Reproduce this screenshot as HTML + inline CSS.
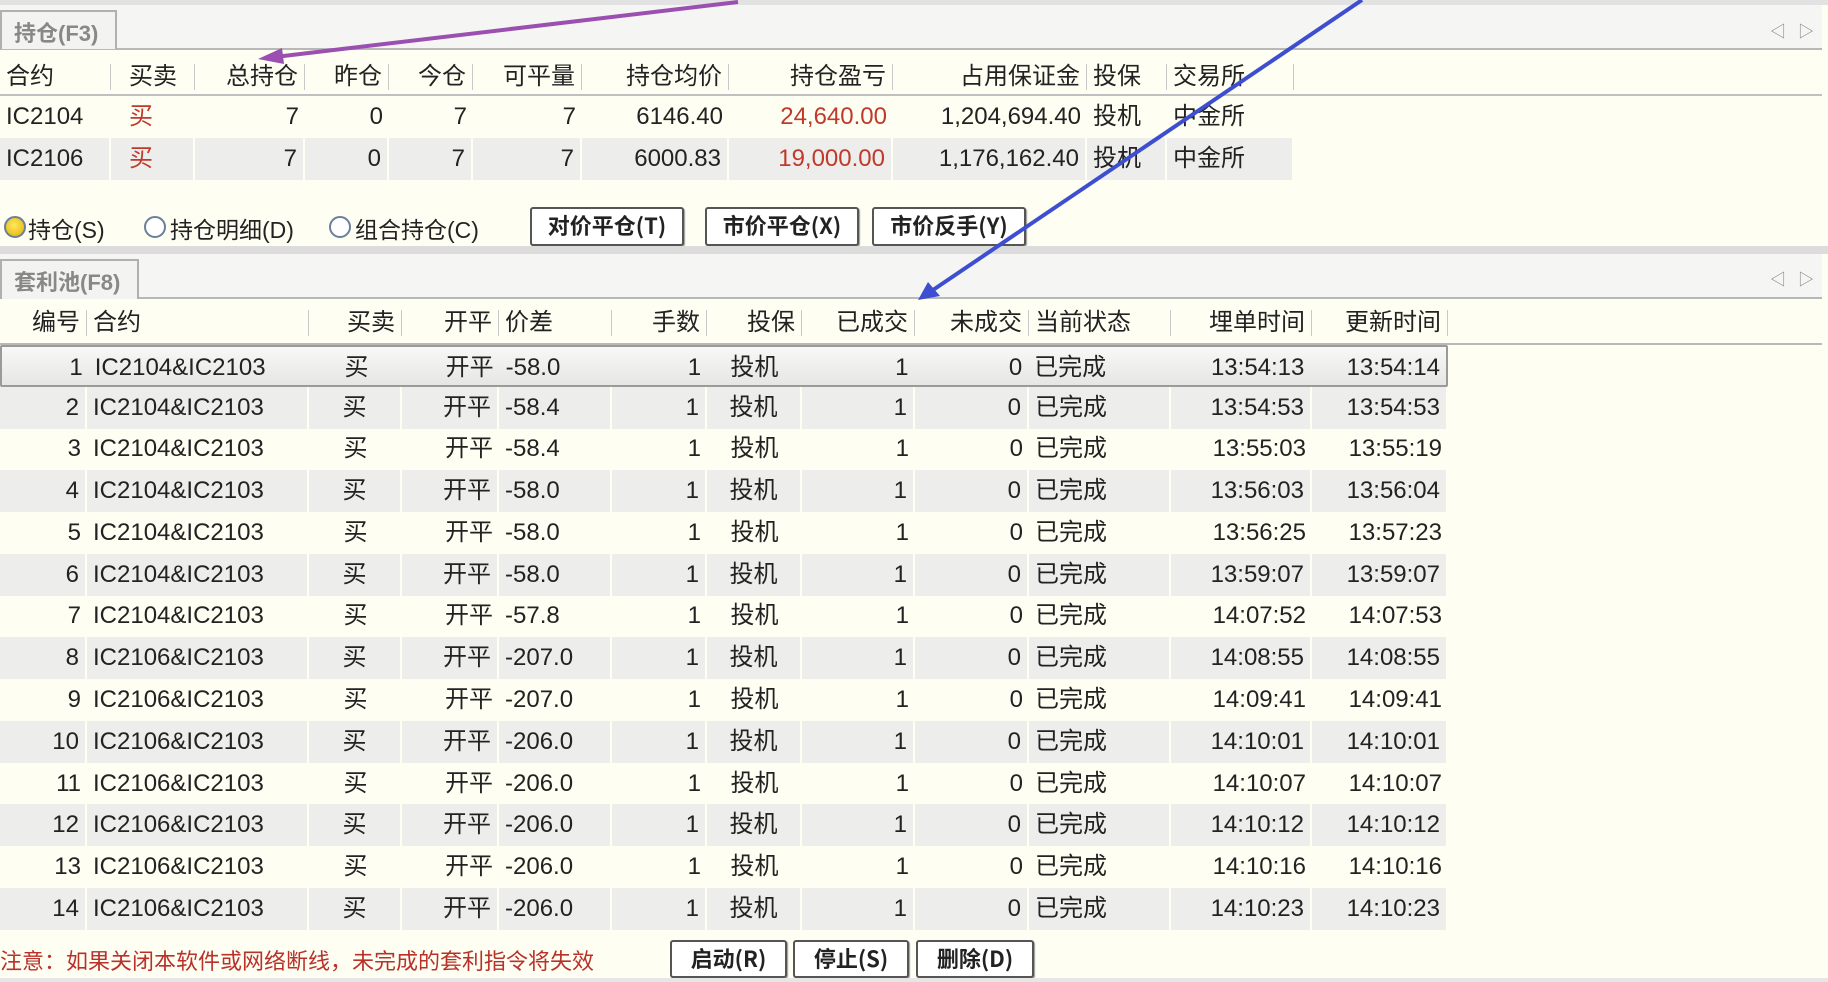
<!DOCTYPE html>
<html><head><meta charset="utf-8"><style>
*{margin:0;padding:0;box-sizing:border-box}
body{width:1828px;height:982px;background:#fefef3;font-family:"Liberation Sans","Noto Sans CJK SC",sans-serif;font-size:24px;color:#222;position:relative;overflow:hidden}
.abs{position:absolute}
.strip{position:absolute;left:0;width:1822px;background:#f5f5f3;border-bottom:2px solid #b8b8b8}
.tab{position:absolute;left:0;background:#f3f3f1;border:2px solid #b0b0b0;border-bottom:none;color:#888;font-weight:bold;font-size:22px;padding:4px 0 0 12px}
.row{position:absolute;left:0;display:flex;height:42px;line-height:42px;white-space:nowrap}
.row>div{overflow:visible;padding:0 6px}
.hd>div{border-right:1px solid #c8c8c8;height:26px;line-height:26px;margin-top:8px}
.g{background:#ededeb}
.g>div{border-right:2px solid #fefef3}
.r{text-align:right}.c{text-align:center}.red{color:#c0392b}
.btn{position:absolute;border:2px solid #555;border-radius:3px;background:#fff;font-weight:bold;font-size:22px;text-align:center;box-shadow:1px 1px 1px #999;font-family:"Noto Sans CJK SC",sans-serif}
.rad{position:absolute;top:216px;width:22px;height:22px;border-radius:50%;border:2px solid #6a7f9a;background:#fff}
.lbl{position:absolute;top:211px;font-size:23px}
.arr{position:absolute;font-size:16px;color:#888}
</style></head><body>
<div class="abs" style="left:0;top:0;width:1828px;height:5px;background:#e2e2e2"></div>
<div class="strip" style="top:5px;height:45px"></div>
<div class="tab" style="top:10px;width:117px;height:39px">持仓(F3)</div>
<div class="arr" style="left:1770px;top:18px">◁</div><div class="arr" style="left:1798px;top:18px">▷</div>

<div class="row hd" style="top:56px;height:40px;border-bottom:2px solid #c0c0c0;width:1822px">
<div style="width:111px">合约</div><div style="width:84px;padding-left:18px">买卖</div><div style="width:110px" class="r">总持仓</div><div style="width:84px" class="r">昨仓</div><div style="width:84px" class="r">今仓</div><div style="width:109px" class="r">可平量</div><div style="width:147px" class="r">持仓均价</div><div style="width:164px" class="r">持仓盈亏</div><div style="width:194px" class="r">占用保证金</div><div style="width:80px">投保</div><div style="width:127px">交易所</div>
</div>
<div class="row" style="top:96px">
<div style="width:111px">IC2104</div><div style="width:84px;padding-left:18px" class="red">买</div><div style="width:110px" class="r">7</div><div style="width:84px" class="r">0</div><div style="width:84px" class="r">7</div><div style="width:109px" class="r">7</div><div style="width:147px" class="r">6146.40</div><div style="width:164px" class="r red">24,640.00</div><div style="width:194px" class="r">1,204,694.40</div><div style="width:80px">投机</div><div style="width:127px">中金所</div></div>
<div class="row g" style="top:138px">
<div style="width:111px">IC2106</div><div style="width:84px;padding-left:18px" class="red">买</div><div style="width:110px" class="r">7</div><div style="width:84px" class="r">0</div><div style="width:84px" class="r">7</div><div style="width:109px" class="r">7</div><div style="width:147px" class="r">6000.83</div><div style="width:164px" class="r red">19,000.00</div><div style="width:194px" class="r">1,176,162.40</div><div style="width:80px">投机</div><div style="width:127px">中金所</div></div>

<div class="rad" style="left:4px;background:radial-gradient(circle at 45% 40%,#ffe860,#e0b000)"></div><div class="lbl" style="left:28px">持仓(S)</div>
<div class="rad" style="left:144px"></div><div class="lbl" style="left:170px">持仓明细(D)</div>
<div class="rad" style="left:329px"></div><div class="lbl" style="left:355px">组合持仓(C)</div>
<div class="btn" style="left:530px;top:207px;width:154px;height:39px;line-height:33px">对价平仓(T)</div>
<div class="btn" style="left:705px;top:207px;width:154px;height:39px;line-height:33px">市价平仓(X)</div>
<div class="btn" style="left:872px;top:207px;width:154px;height:39px;line-height:33px">市价反手(Y)</div>

<div class="abs" style="left:0;top:246px;width:1828px;height:8px;background:#dcdcdc"></div>
<div class="strip" style="top:254px;height:45px"></div>
<div class="tab" style="top:259px;width:139px;height:40px">套利池(F8)</div>
<div class="arr" style="left:1770px;top:266px">◁</div><div class="arr" style="left:1798px;top:266px">▷</div>

<div class="row hd" style="top:302px;height:43px;border-bottom:2px solid #b8b8b8;width:1822px">
<div style="width:87px" class="r">编号</div><div style="width:222px">合约</div><div style="width:93px" class="r">买卖</div><div style="width:97px" class="r">开平</div><div style="width:113px">价差</div><div style="width:95px" class="r">手数</div><div style="width:95px" class="r">投保</div><div style="width:113px" class="r">已成交</div><div style="width:114px" class="r">未成交</div><div style="width:142px">当前状态</div><div style="width:141px" class="r">埋单时间</div><div style="width:136px" class="r">更新时间</div>
</div>

<div id="t2"></div>
<div class="row" style="top:345px;width:1448px;background:linear-gradient(#f8f8f6,#e6e6e4);border:2px solid #9a9a9a;border-radius:2px"><div style="width:87px" class="r">1</div><div style="width:222px">IC2104&amp;IC2103</div><div style="width:93px" class="c">买</div><div style="width:97px" class="r">开平</div><div style="width:113px">-58.0</div><div style="width:95px" class="r">1</div><div style="width:95px" class="c">投机</div><div style="width:113px" class="r">1</div><div style="width:114px" class="r">0</div><div style="width:142px">已完成</div><div style="width:141px" class="r">13:54:13</div><div style="width:136px" class="r">13:54:14</div></div>
<div class="row g" style="top:387px"><div style="width:87px" class="r">2</div><div style="width:222px">IC2104&amp;IC2103</div><div style="width:93px" class="c">买</div><div style="width:97px" class="r">开平</div><div style="width:113px">-58.4</div><div style="width:95px" class="r">1</div><div style="width:95px" class="c">投机</div><div style="width:113px" class="r">1</div><div style="width:114px" class="r">0</div><div style="width:142px">已完成</div><div style="width:141px" class="r">13:54:53</div><div style="width:136px" class="r">13:54:53</div></div>
<div class="row" style="top:428px"><div style="width:87px" class="r">3</div><div style="width:222px">IC2104&amp;IC2103</div><div style="width:93px" class="c">买</div><div style="width:97px" class="r">开平</div><div style="width:113px">-58.4</div><div style="width:95px" class="r">1</div><div style="width:95px" class="c">投机</div><div style="width:113px" class="r">1</div><div style="width:114px" class="r">0</div><div style="width:142px">已完成</div><div style="width:141px" class="r">13:55:03</div><div style="width:136px" class="r">13:55:19</div></div>
<div class="row g" style="top:470px"><div style="width:87px" class="r">4</div><div style="width:222px">IC2104&amp;IC2103</div><div style="width:93px" class="c">买</div><div style="width:97px" class="r">开平</div><div style="width:113px">-58.0</div><div style="width:95px" class="r">1</div><div style="width:95px" class="c">投机</div><div style="width:113px" class="r">1</div><div style="width:114px" class="r">0</div><div style="width:142px">已完成</div><div style="width:141px" class="r">13:56:03</div><div style="width:136px" class="r">13:56:04</div></div>
<div class="row" style="top:512px"><div style="width:87px" class="r">5</div><div style="width:222px">IC2104&amp;IC2103</div><div style="width:93px" class="c">买</div><div style="width:97px" class="r">开平</div><div style="width:113px">-58.0</div><div style="width:95px" class="r">1</div><div style="width:95px" class="c">投机</div><div style="width:113px" class="r">1</div><div style="width:114px" class="r">0</div><div style="width:142px">已完成</div><div style="width:141px" class="r">13:56:25</div><div style="width:136px" class="r">13:57:23</div></div>
<div class="row g" style="top:554px"><div style="width:87px" class="r">6</div><div style="width:222px">IC2104&amp;IC2103</div><div style="width:93px" class="c">买</div><div style="width:97px" class="r">开平</div><div style="width:113px">-58.0</div><div style="width:95px" class="r">1</div><div style="width:95px" class="c">投机</div><div style="width:113px" class="r">1</div><div style="width:114px" class="r">0</div><div style="width:142px">已完成</div><div style="width:141px" class="r">13:59:07</div><div style="width:136px" class="r">13:59:07</div></div>
<div class="row" style="top:595px"><div style="width:87px" class="r">7</div><div style="width:222px">IC2104&amp;IC2103</div><div style="width:93px" class="c">买</div><div style="width:97px" class="r">开平</div><div style="width:113px">-57.8</div><div style="width:95px" class="r">1</div><div style="width:95px" class="c">投机</div><div style="width:113px" class="r">1</div><div style="width:114px" class="r">0</div><div style="width:142px">已完成</div><div style="width:141px" class="r">14:07:52</div><div style="width:136px" class="r">14:07:53</div></div>
<div class="row g" style="top:637px"><div style="width:87px" class="r">8</div><div style="width:222px">IC2106&amp;IC2103</div><div style="width:93px" class="c">买</div><div style="width:97px" class="r">开平</div><div style="width:113px">-207.0</div><div style="width:95px" class="r">1</div><div style="width:95px" class="c">投机</div><div style="width:113px" class="r">1</div><div style="width:114px" class="r">0</div><div style="width:142px">已完成</div><div style="width:141px" class="r">14:08:55</div><div style="width:136px" class="r">14:08:55</div></div>
<div class="row" style="top:679px"><div style="width:87px" class="r">9</div><div style="width:222px">IC2106&amp;IC2103</div><div style="width:93px" class="c">买</div><div style="width:97px" class="r">开平</div><div style="width:113px">-207.0</div><div style="width:95px" class="r">1</div><div style="width:95px" class="c">投机</div><div style="width:113px" class="r">1</div><div style="width:114px" class="r">0</div><div style="width:142px">已完成</div><div style="width:141px" class="r">14:09:41</div><div style="width:136px" class="r">14:09:41</div></div>
<div class="row g" style="top:721px"><div style="width:87px" class="r">10</div><div style="width:222px">IC2106&amp;IC2103</div><div style="width:93px" class="c">买</div><div style="width:97px" class="r">开平</div><div style="width:113px">-206.0</div><div style="width:95px" class="r">1</div><div style="width:95px" class="c">投机</div><div style="width:113px" class="r">1</div><div style="width:114px" class="r">0</div><div style="width:142px">已完成</div><div style="width:141px" class="r">14:10:01</div><div style="width:136px" class="r">14:10:01</div></div>
<div class="row" style="top:763px"><div style="width:87px" class="r">11</div><div style="width:222px">IC2106&amp;IC2103</div><div style="width:93px" class="c">买</div><div style="width:97px" class="r">开平</div><div style="width:113px">-206.0</div><div style="width:95px" class="r">1</div><div style="width:95px" class="c">投机</div><div style="width:113px" class="r">1</div><div style="width:114px" class="r">0</div><div style="width:142px">已完成</div><div style="width:141px" class="r">14:10:07</div><div style="width:136px" class="r">14:10:07</div></div>
<div class="row g" style="top:804px"><div style="width:87px" class="r">12</div><div style="width:222px">IC2106&amp;IC2103</div><div style="width:93px" class="c">买</div><div style="width:97px" class="r">开平</div><div style="width:113px">-206.0</div><div style="width:95px" class="r">1</div><div style="width:95px" class="c">投机</div><div style="width:113px" class="r">1</div><div style="width:114px" class="r">0</div><div style="width:142px">已完成</div><div style="width:141px" class="r">14:10:12</div><div style="width:136px" class="r">14:10:12</div></div>
<div class="row" style="top:846px"><div style="width:87px" class="r">13</div><div style="width:222px">IC2106&amp;IC2103</div><div style="width:93px" class="c">买</div><div style="width:97px" class="r">开平</div><div style="width:113px">-206.0</div><div style="width:95px" class="r">1</div><div style="width:95px" class="c">投机</div><div style="width:113px" class="r">1</div><div style="width:114px" class="r">0</div><div style="width:142px">已完成</div><div style="width:141px" class="r">14:10:16</div><div style="width:136px" class="r">14:10:16</div></div>
<div class="row g" style="top:888px"><div style="width:87px" class="r">14</div><div style="width:222px">IC2106&amp;IC2103</div><div style="width:93px" class="c">买</div><div style="width:97px" class="r">开平</div><div style="width:113px">-206.0</div><div style="width:95px" class="r">1</div><div style="width:95px" class="c">投机</div><div style="width:113px" class="r">1</div><div style="width:114px" class="r">0</div><div style="width:142px">已完成</div><div style="width:141px" class="r">14:10:23</div><div style="width:136px" class="r">14:10:23</div></div>

<div class="abs red" style="left:0;top:944px;font-size:22px;color:#b8322a">注意：如果关闭本软件或网络断线，未完成的套利指令将失效</div>
<div class="btn" style="left:670px;top:940px;width:117px;height:38px;line-height:32px">启动(R)</div>
<div class="btn" style="left:793px;top:940px;width:116px;height:38px;line-height:32px">停止(S)</div>
<div class="btn" style="left:916px;top:940px;width:118px;height:38px;line-height:32px">删除(D)</div>
<div class="abs" style="left:0;top:978px;width:1828px;height:4px;background:#e6e6e6"></div>

<svg class="abs" style="left:0;top:0" width="1828" height="982">
<line x1="738" y1="2" x2="275" y2="57" stroke="#9b4fb0" stroke-width="4"/>
<polygon points="258,59 282,48 284,64" fill="#9b4fb0"/>
<line x1="1362" y1="0" x2="930" y2="292" stroke="#3d4fd0" stroke-width="4"/>
<polygon points="918,300 928,282 940,296" fill="#3d4fd0"/>
</svg>
</body></html>
